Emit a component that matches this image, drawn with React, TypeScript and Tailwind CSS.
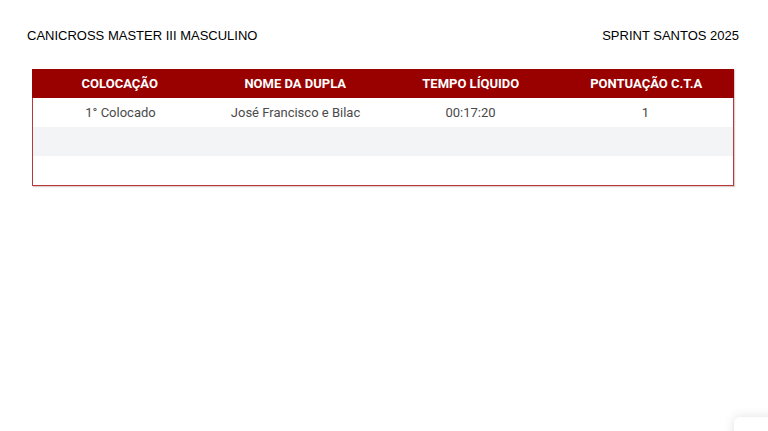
const rows = [
  { pos: "1° Colocado", nome: "José Francisco e Bilac", tempo: "00:17:20", pts: "1" },
  { pos: "", nome: "", tempo: "", pts: "" },
  { pos: "", nome: "", tempo: "", pts: "" },
];

const App = () => {
  return (
    <div className="relative w-[768px] h-[431px] overflow-hidden bg-white">
      <div className="flex items-center justify-between pl-[27px] pr-[29px] pt-[27px] font-['Liberation_Sans',Arial,sans-serif] text-[13px] text-black leading-[18px]">
        <span>CANICROSS MASTER III MASCULINO</span>
        <span>SPRINT SANTOS 2025</span>
      </div>
      <div className="mx-[32px] mt-[24px] w-[702px] border border-[#b8383d] shadow-[1px_1px_1px_rgba(120,60,60,0.25)] font-['Roboto',sans-serif] text-[13px]">
        <div className="grid grid-cols-4 h-[29px] items-center bg-[#990000] text-white font-bold -mt-px -mx-px pt-px">
          <div className="text-center">COLOCAÇÃO</div>
          <div className="text-center">NOME DA DUPLA</div>
          <div className="text-center">TEMPO LÍQUIDO</div>
          <div className="text-center">PONTUAÇÃO C.T.A</div>
        </div>
        {rows.map((r, i) => (
          <div
            key={i}
            className={`grid grid-cols-4 h-[29px] items-center pt-px text-[#4a4a4a] ${i % 2 === 1 ? "bg-[#f3f4f6]" : "bg-white"}`}
          >
            <div className="text-center">{r.pos}</div>
            <div className="text-center">{r.nome}</div>
            <div className="text-center">{r.tempo}</div>
            <div className="text-center">{r.pts}</div>
          </div>
        ))}
      </div>
      <div className="absolute left-[734px] top-[417px] w-[50px] h-[50px] rounded-md bg-white shadow-[0_0_12px_rgba(0,0,0,0.12)]"></div>
    </div>
  );
};

export default App;
